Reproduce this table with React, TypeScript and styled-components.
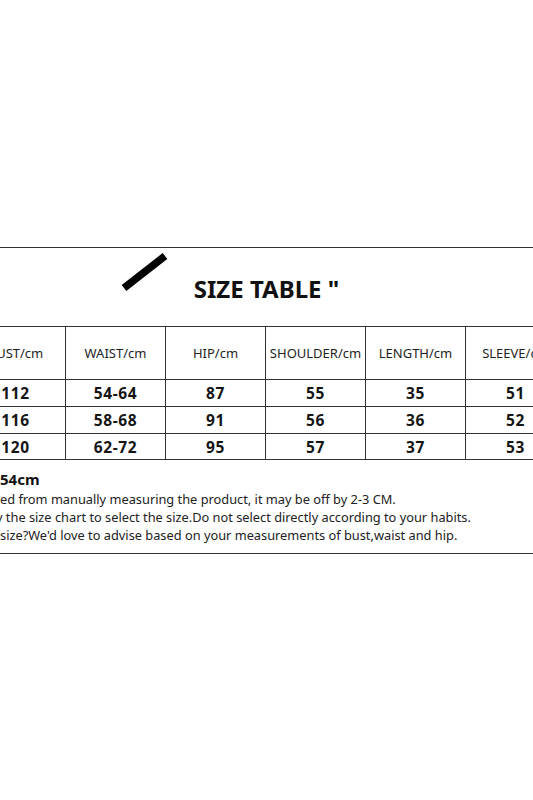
import React from "react";
import styled, { createGlobalStyle } from "styled-components";

const Global = createGlobalStyle`
  html, body { margin: 0; padding: 0; background: #fff; }
  body { font-family: "Noto Sans", "Open Sans", sans-serif; color: #1a1a1a; }
`;

const Page = styled.div`
  width: 533px;
  height: 800px;
  overflow: hidden;
  background: #fff;
  display: flex;
  flex-direction: column;
`;

const TopSpace = styled.div`
  height: 247px;
  flex: none;
`;

const Sheet = styled.section`
  border-top: 1px solid #333;
  border-bottom: 1px solid #333;
  flex: none;
`;

const TitleBar = styled.div`
  height: 78px;
  box-sizing: border-box;
  padding-top: 26px;
  display: flex;
  justify-content: center;
  align-items: flex-start;
`;

const TitleWrap = styled.div`
  position: relative;
`;

const Title = styled.h1`
  margin: 0;
  font-size: 24px;
  line-height: 30px;
  font-weight: 700;
  color: #111;
  white-space: nowrap;
`;

const Slash = styled.svg`
  position: absolute;
  left: -75px;
  top: -24px;
`;

const Grid = styled.div`
  border-top: 1px solid #333;
  border-bottom: 1px solid #333;
  display: grid;
  grid-template-columns: repeat(6, 100px);
  margin-left: -34px;
  width: 600px;
`;

const Cell = styled.div<{ $head?: boolean }>`
  box-sizing: border-box;
  height: ${(p) => (p.$head ? 53 : 27)}px;
  border-right: 1px solid #333;
  border-bottom: 1px solid #333;
  display: flex;
  align-items: center;
  justify-content: center;
  white-space: nowrap;
  font-size: ${(p) => (p.$head ? 13 : 15.5)}px;
  font-weight: ${(p) => (p.$head ? 400 : 700)};
  color: ${(p) => (p.$head ? "#1e1e1e" : "#151515")};
  letter-spacing: ${(p) => (p.$head ? "0" : "0.6px")};
  &:nth-last-child(-n + 6) {
    border-bottom: none;
    height: 25px;
  }
`;

const Notes = styled.div`
  padding: 8px 0 9px 0;
  color: #222;
`;

const NoteTitle = styled.div`
  font-size: 15px;
  font-weight: 700;
  line-height: 22px;
  color: #111;
  white-space: nowrap;
`;

const NoteLine = styled.div<{ $shift?: number }>`
  font-size: 12.8px;
  line-height: 18px;
  white-space: nowrap;
  margin-left: ${(p) => p.$shift ?? 0}px;
`;

const heads = ["BUST/cm", "WAIST/cm", "HIP/cm", "SHOULDER/cm", "LENGTH/cm", "SLEEVE/cm"];
const rows = [
  ["112", "54-64", "87", "55", "35", "51"],
  ["116", "58-68", "91", "56", "36", "52"],
  ["120", "62-72", "95", "57", "37", "53"],
];

export default function App() {
  return (
    <Page>
      <Global />
      <TopSpace />
      <Sheet>
        <TitleBar>
          <TitleWrap>
            <Slash width="52" height="44" viewBox="0 0 52 44">
              <line x1="5" y1="38" x2="46" y2="6" stroke="#000" strokeWidth="7.5" />
            </Slash>
            <Title>SIZE TABLE "</Title>
          </TitleWrap>
        </TitleBar>
        <Grid>
          {heads.map((h) => (
            <Cell $head key={h}>{h}</Cell>
          ))}
          {rows.flatMap((r, i) => r.map((v, j) => <Cell key={`${i}-${j}`}>{v}</Cell>))}
        </Grid>
        <Notes>
          <NoteTitle>54cm</NoteTitle>
          <NoteLine>ed from manually measuring the product, it may be off by 2-3 CM.</NoteLine>
          <NoteLine $shift={-4}>y the size chart to select the size.Do not select directly according to your habits.</NoteLine>
          <NoteLine>size?We'd love to advise based on your measurements of bust,waist and hip.</NoteLine>
        </Notes>
      </Sheet>
    </Page>
  );
}
